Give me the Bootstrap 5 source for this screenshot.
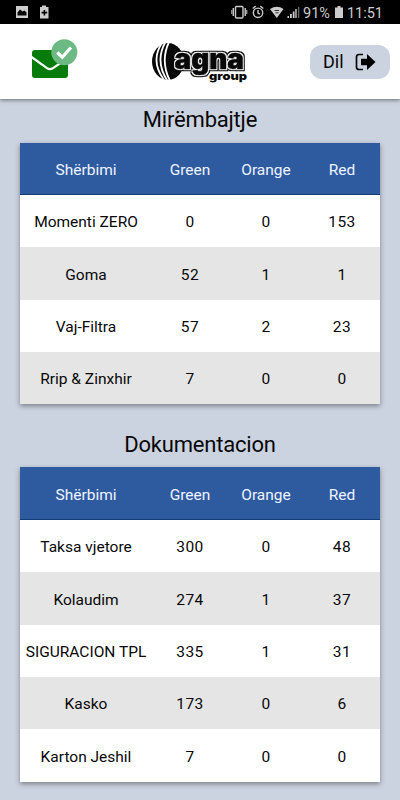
<!DOCTYPE html>
<html lang="sq">
<head>
<meta charset="utf-8">
<meta name="viewport" content="width=device-width, initial-scale=1">
<title>Agna Group</title>
<link href="https://cdn.jsdelivr.net/npm/bootstrap@5.3.0/dist/css/bootstrap.min.css" rel="stylesheet">
<style>
body{background:#ccd3e0;font-family:Roboto,"Liberation Sans",sans-serif;color:#080808;height:800px;overflow:hidden}
.status{height:24px;background:#000;color:#ccc}
.status svg,.topbar svg{display:block}
.topbar{height:75px;background:#fff;box-shadow:0 1px 4px rgba(0,0,0,.5);padding:0 10px 0 30px}
.logo{left:150px;top:16px}
.exit{width:80px;height:34px;border-radius:12px;background:#ccd3e0;font-size:18px;border:0;color:#080808;padding:0 0 0 13px}
.exit svg{margin-left:2px}
.heading{font-size:22px;line-height:26px;letter-spacing:-.2px;margin:0;font-weight:400}
.first{padding-top:8px;height:43.5px}
.second{padding-top:28px;height:63px}
.sheet{margin:0 20px;background:#fff;box-shadow:0 2px 5px rgba(0,0,0,.4)}
.line{display:grid;grid-template-columns:132px 76px 76px 76px;height:52.4px;align-items:center;text-align:center;font-size:15.5px;padding-top:3.5px;letter-spacing:0}
.line:nth-child(odd){background:#e5e5e5}
.line.top{background:#2e5a9f;color:#eef4ff;border-bottom:1px solid #123c78;padding-top:5px}
.line span{white-space:nowrap}
.line:not(.top) span+span{letter-spacing:.45px}
</style>
</head>
<body>
<div class="status">
<svg width="400" height="24" font-family="Roboto,sans-serif" fill="#ccc">
<path fill-rule="evenodd" d="M16 6h12v12H16zM17.500 15.500h9v-3l-2-2-2 1-2.500-2-2.500 3z"/>
<path fill-rule="evenodd" d="M42 5.500h4V7h2.500v11.500h-8.500V7h2zM43.600 10v1.800h-2v1.700h2v2h1.600v-2h2v-1.700h-2V10z"/>
<g fill="none" stroke="#ccc" stroke-width="1.400"><rect x="235.500" y="6.500" width="7.500" height="11.500" rx="1"/><path d="M233.300 8v8M245.200 8v8"/><path d="M231.800 10v4M246.800 10v4" stroke-width="1"/><circle cx="258" cy="12.800" r="4.700"/><path d="M258 10v3l2 1.200M252.700 8.500l3-2.400M263.300 8.500l-3-2.400"/></g>
<path d="M270 9q7-4.500 13.500 0L276.800 18z"/><path d="M274.500 10.500h4.500M275.500 12.800h3" stroke="#333"/>
<path d="M287.500 18v-2h1.500v2zM290 18v-4h1.800v4zM292.800 18v-6.500h1.700V18z"/><path d="M295.400 18V9h1.500v9zM298 18V7h1.300v11z" opacity=".5"/><path d="M295.400 18V9h1v9z"/>
<text x="303" y="17.500" font-size="14" textLength="27" lengthAdjust="spacingAndGlyphs">91%</text>
<path d="M337.500 6h3v1.500h2.500V18h-8V7.500h2.500z"/>
<text x="347" y="17.500" font-size="14.500" textLength="36">11:51</text>
</svg>
</div>
<header class="topbar d-flex align-items-center justify-content-between position-relative">
<svg width="50" height="46" viewBox="30 38 50 46">
<rect x="32" y="49" width="36" height="28" rx="3" fill="#087c0b"/>
<path d="M31.500 56L47 67.200q3 2 6 0L68 57" fill="none" stroke="#fff" stroke-width="2.200"/>
<circle cx="64.300" cy="51.300" r="13" fill="#6db984"/>
<path d="M57.300 51.500l5 4.800L71 46.500" fill="none" stroke="#fff" stroke-width="3.200"/>
</svg>
<svg class="logo position-absolute" width="100" height="44" viewBox="150 40 100 44" font-family="Inter,'Liberation Sans',sans-serif" font-weight="900">
<defs><filter id="ring" filterUnits="userSpaceOnUse" x="150" y="40" width="100" height="44" color-interpolation-filters="sRGB">
<feMorphology in="SourceAlpha" operator="dilate" radius="2" result="wide"/><feFlood flood-color="#090909"/><feComposite in2="wide" operator="in" result="outer"/>
<feMorphology in="SourceAlpha" operator="dilate" radius="1" result="near"/><feFlood flood-color="#fff"/><feComposite in2="near" operator="in" result="inner"/>
<feMerge><feMergeNode in="outer"/><feMergeNode in="inner"/><feMergeNode in="SourceGraphic"/></feMerge></filter></defs>
<ellipse cx="168" cy="61.500" rx="16" ry="18.500" fill="#090909"/>
<g fill="none" stroke="#fff" stroke-width="1.800"><path d="M162 43q-12 18 2 37M165.500 42q-11 19 2 39M169 42q-9 19 1 39"/></g>
<g stroke-linejoin="round" fill="#090909">
<text filter="url(#ring)" x="174.500" y="69" font-size="28" textLength="69.500" lengthAdjust="spacingAndGlyphs" stroke="#090909" stroke-width=".5">agna</text>
<text x="209" y="79.500" font-size="11" textLength="38" lengthAdjust="spacingAndGlyphs" stroke="#fff" stroke-width="2.500" paint-order="stroke">group</text></g>
</svg>
<button class="exit d-flex align-items-center gap-2" type="button"><span>Dil</span>
<svg width="22" height="18" viewBox="354 53 22 18"><path d="M363 54.500h-4q-2.500 0-2.500 2.500v10q0 2.500 2.500 2.500h4" fill="none" stroke="#080808" stroke-width="1.700"/><path d="M361 58.800h6V54l8.500 8-8.500 8v-4.800h-6z"/></svg></button>
</header>
<main>
<h1 class="heading first text-center">Mirëmbajtje</h1>
<section class="sheet">
<div class="line top"><span>Shërbimi</span><span>Green</span><span>Orange</span><span>Red</span></div>
<div class="line"><span>Momenti ZERO</span><span>0</span><span>0</span><span>153</span></div>
<div class="line"><span>Goma</span><span>52</span><span>1</span><span>1</span></div>
<div class="line"><span>Vaj-Filtra</span><span>57</span><span>2</span><span>23</span></div>
<div class="line"><span>Rrip &amp; Zinxhir</span><span>7</span><span>0</span><span>0</span></div>
</section>
<h1 class="heading second text-center">Dokumentacion</h1>
<section class="sheet">
<div class="line top"><span>Shërbimi</span><span>Green</span><span>Orange</span><span>Red</span></div>
<div class="line"><span>Taksa vjetore</span><span>300</span><span>0</span><span>48</span></div>
<div class="line"><span>Kolaudim</span><span>274</span><span>1</span><span>37</span></div>
<div class="line"><span>SIGURACION TPL</span><span>335</span><span>1</span><span>31</span></div>
<div class="line"><span>Kasko</span><span>173</span><span>0</span><span>6</span></div>
<div class="line"><span>Karton Jeshil</span><span>7</span><span>0</span><span>0</span></div>
</section>
</main>
<script src="https://cdn.jsdelivr.net/npm/bootstrap@5.3.0/dist/js/bootstrap.bundle.min.js"></script>
</body>
</html>
